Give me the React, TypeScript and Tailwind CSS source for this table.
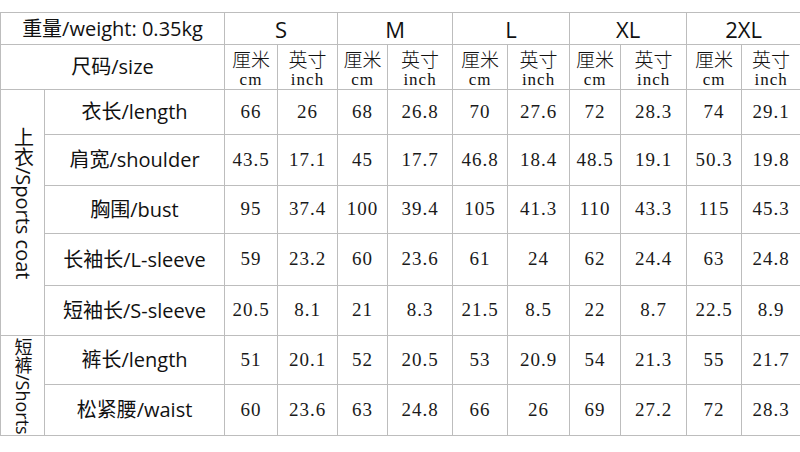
const sizes = ["S", "M", "L", "XL", "2XL"];

const coat = [
  { label: "衣长/length", h: "h-[45px]", v: ["66", "26", "68", "26.8", "70", "27.6", "72", "28.3", "74", "29.1"] },
  { label: "肩宽/shoulder", h: "h-[51px]", v: ["43.5", "17.1", "45", "17.7", "46.8", "18.4", "48.5", "19.1", "50.3", "19.8"] },
  { label: "胸围/bust", h: "h-[48px]", v: ["95", "37.4", "100", "39.4", "105", "41.3", "110", "43.3", "115", "45.3"] },
  { label: "长袖长/L-sleeve", h: "h-[52px]", v: ["59", "23.2", "60", "23.6", "61", "24", "62", "24.4", "63", "24.8"] },
  { label: "短袖长/S-sleeve", h: "h-[50px]", v: ["20.5", "8.1", "21", "8.3", "21.5", "8.5", "22", "8.7", "22.5", "8.9"] },
];

const shorts = [
  { label: "裤长/length", h: "h-[49px]", v: ["51", "20.1", "52", "20.5", "53", "20.9", "54", "21.3", "55", "21.7"] },
  { label: "松紧腰/waist", h: "h-[50px]", v: ["60", "23.6", "63", "24.8", "66", "26", "69", "27.2", "72", "28.3"] },
];

const sans = "font-['Open_Sans','Noto_Sans_CJK_SC',sans-serif]";
const serif = "font-['Liberation_Serif','Noto_Sans_CJK_SC',serif]";
const cell = "border border-[#bdbdbd] p-0 text-center align-middle";

function Values({ v }: { v: string[] }) {
  return (
    <>
      {v.map((x, i) => (
        <td key={i} className={`${cell} ${serif} text-[19px] tracking-[1px] text-[#1a1a1a]`}>
          {x}
        </td>
      ))}
    </>
  );
}

function Unit({ zh, en }: { zh: string; en: string }) {
  return (
    <td className={`${cell} ${serif}`}>
      <div className="flex flex-col items-center gap-[3px] pt-[2px]">
        <span className="text-[19px] leading-[19px] font-light font-['Noto_Sans_CJK_SC',serif]">{zh}</span>
        <span className="text-[17px] leading-[17px] tracking-[1px]">{en}</span>
      </div>
    </td>
  );
}

export default function App() {
  return (
    <div className="w-[800px] h-[452px] bg-white pt-[12px]">
      <table className="w-[800px] table-fixed border-collapse text-[#111]">
        <colgroup>
          <col className="w-[44px]" />
          <col className="w-[180px]" />
          <col className="w-[53px]" />
          <col className="w-[60px]" />
          <col className="w-[50px]" />
          <col className="w-[65px]" />
          <col className="w-[55px]" />
          <col className="w-[62px]" />
          <col className="w-[51px]" />
          <col className="w-[66px]" />
          <col className="w-[55px]" />
          <col className="w-[59px]" />
        </colgroup>
        <tbody>
          <tr className="h-[32px]">
            <td colSpan={2} className={`${cell} ${sans} text-[20px] leading-none`}>
              重量/weight: 0.35kg
            </td>
            {sizes.map((s) => (
              <td key={s} colSpan={2} className={`${cell} ${sans} text-[22px] leading-none`}>
                {s}
              </td>
            ))}
          </tr>
          <tr className="h-[45px]">
            <td colSpan={2} className={`${cell} ${sans} text-[20px]`}>
              尺码/size
            </td>
            {sizes.flatMap((s) => [
              <Unit key={s + "cm"} zh="厘米" en="cm" />,
              <Unit key={s + "in"} zh="英寸" en="inch" />,
            ])}
          </tr>
          {coat.map((r, i) => (
            <tr key={r.label} className={r.h}>
              {i === 0 && (
                <td rowSpan={5} className={`${cell} pb-[18px]`}>
                  <div className="flex justify-center">
                    <span className={`${sans} text-[20px] [writing-mode:vertical-rl] leading-none`}>
                      上衣/Sports coat
                    </span>
                  </div>
                </td>
              )}
              <td className={`${cell} ${sans} text-[20px]`}>{r.label}</td>
              <Values v={r.v} />
            </tr>
          ))}
          {shorts.map((r, i) => (
            <tr key={r.label} className={r.h}>
              {i === 0 && (
                <td rowSpan={2} className={`${cell} !align-top pt-[2px]`}>
                  <div className="flex justify-center">
                    <span className={`${sans} text-[18px] [writing-mode:vertical-rl] leading-none`}>
                      短裤/Shorts
                    </span>
                  </div>
                </td>
              )}
              <td className={`${cell} ${sans} text-[20px]`}>{r.label}</td>
              <Values v={r.v} />
            </tr>
          ))}
        </tbody>
      </table>
    </div>
  );
}
